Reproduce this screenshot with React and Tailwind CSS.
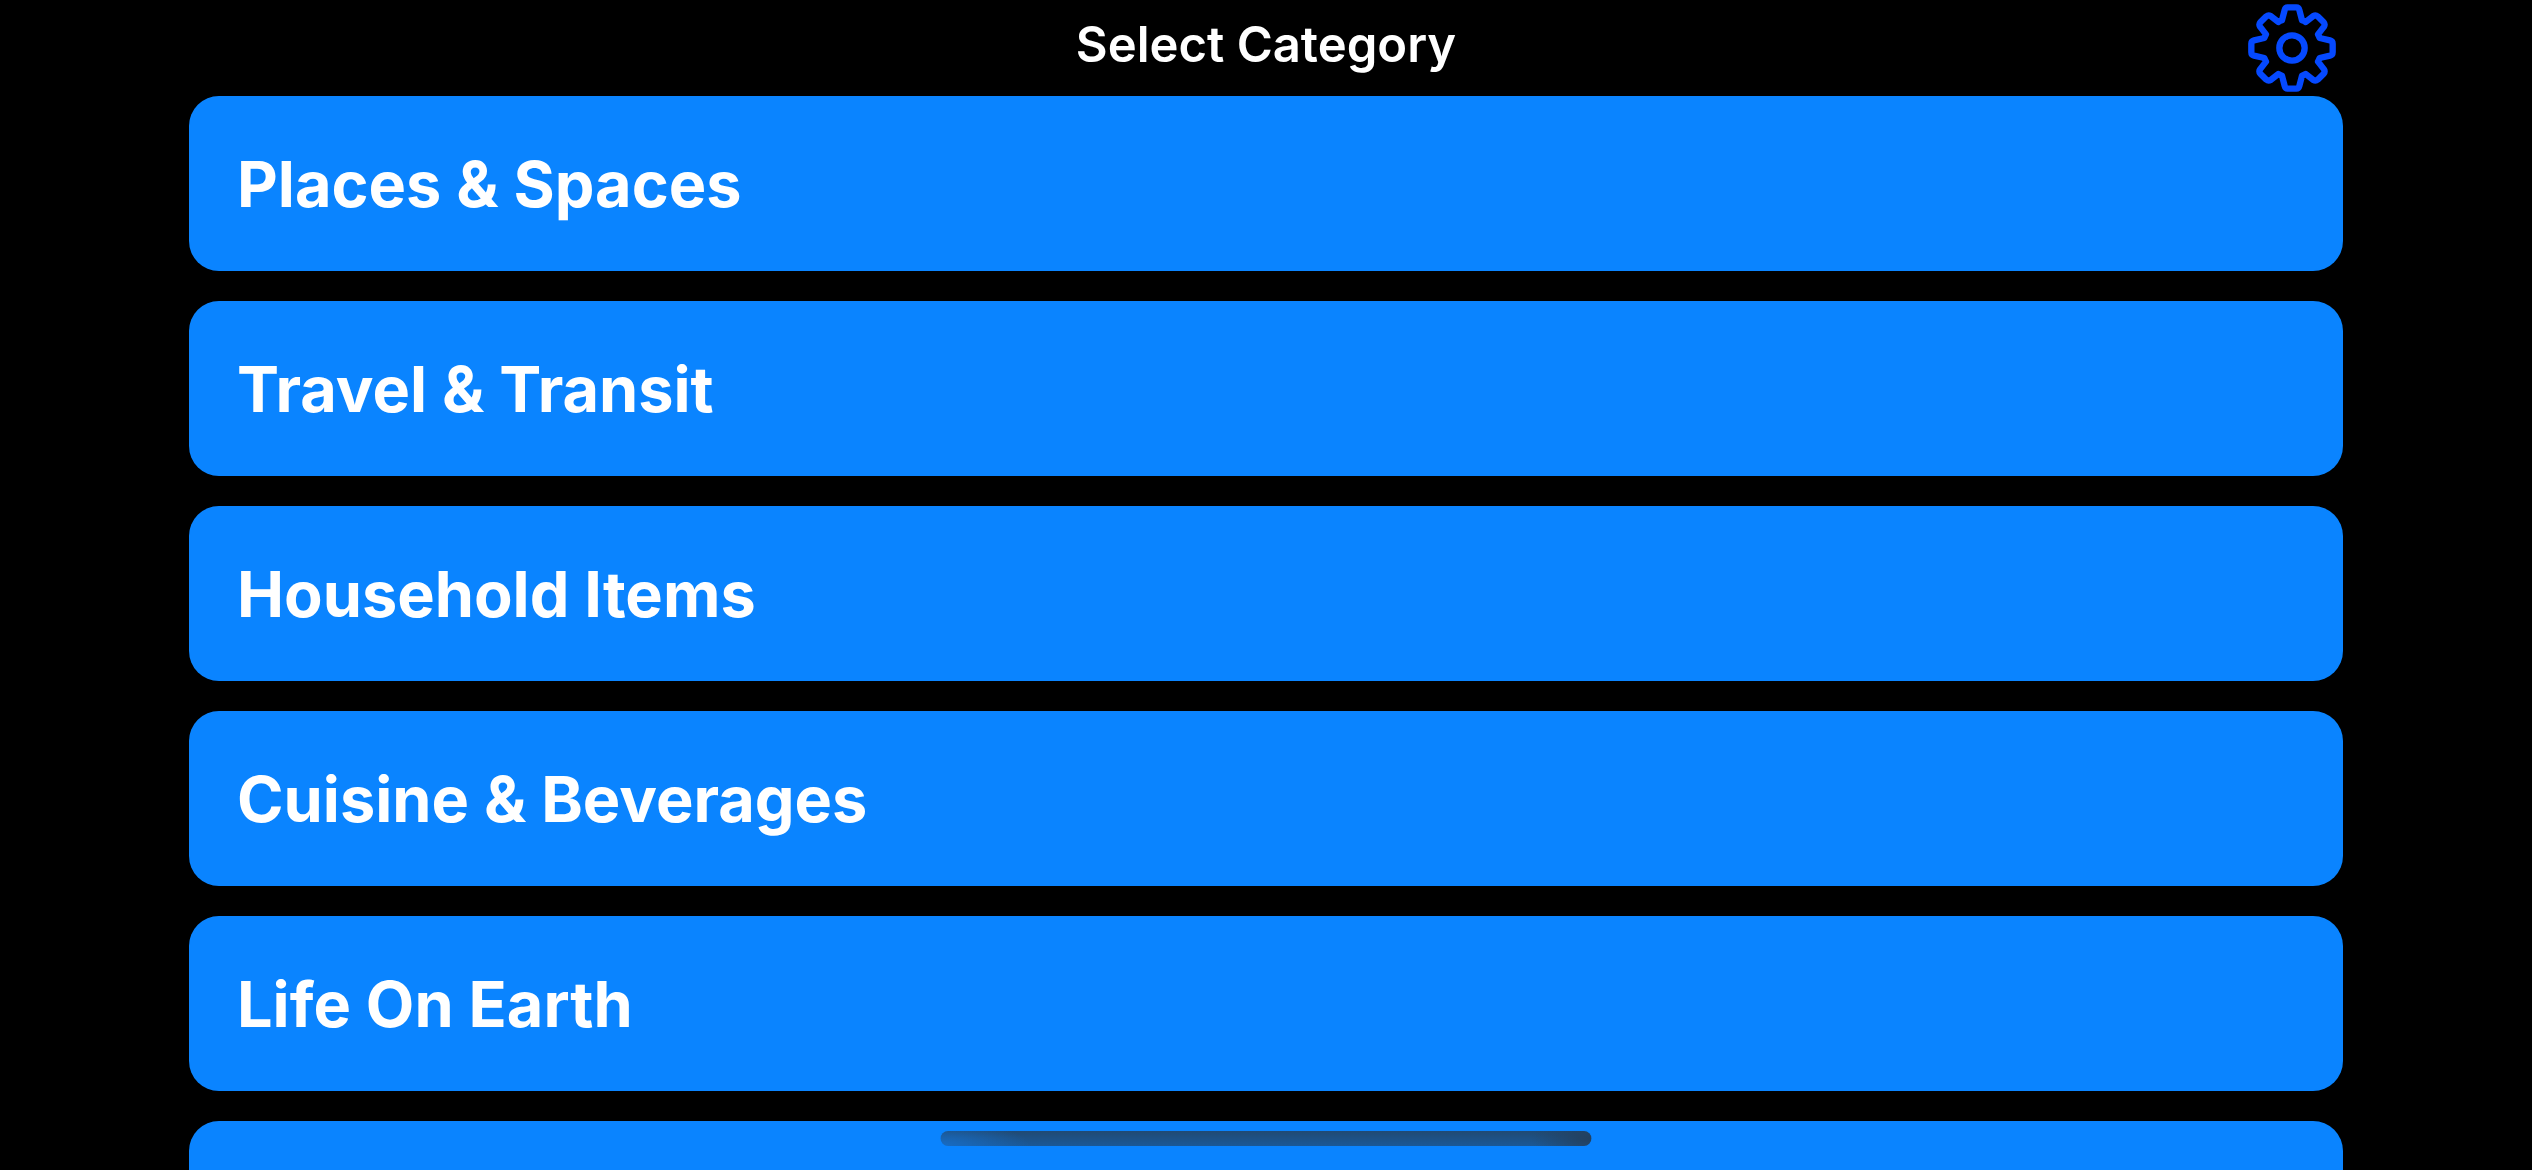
import React from "react";

const categories = [
  "Places & Spaces",
  "Travel & Transit",
  "Household Items",
  "Cuisine & Beverages",
  "Life On Earth",
];

function GearIcon() {
  return (
    <svg viewBox="-132 -132 264 264" className="size-[88px]" fill="none" stroke="#0549ff" strokeWidth="19" strokeLinejoin="round">
      <circle r="38" />
      <path
        d="M-13 -122 H13 Q20 -122 22 -114 L30 -83 Q36 -81 41 -78 L64 -96 Q71 -100 77 -95 L95 -77 Q100 -71 96 -64 L78 -41
           Q81 -36 83 -30 L114 -23 Q122 -21 122 -13 V13 Q122 21 114 23 L83 30 Q81 36 78 41 L96 64 Q100 71 95 77 L77 95 Q71 100 64 96 L41 78
           Q36 81 30 83 L22 114 Q20 122 13 122 H-13 Q-20 122 -22 114 L-30 83 Q-36 81 -41 78 L-64 96 Q-71 100 -77 95 L-95 77 Q-100 71 -96 64 L-78 41
           Q-81 36 -83 30 L-114 23 Q-122 21 -122 13 V-13 Q-122 -21 -114 -23 L-83 -30 Q-81 -36 -78 -41 L-96 -64 Q-100 -71 -95 -77 L-77 -95
           Q-71 -100 -64 -96 L-41 -78 Q-36 -81 -30 -83 L-22 -114 Q-20 -122 -13 -122 Z"
      />
    </svg>
  );
}

export default function App() {
  return (
    <div className="relative h-screen overflow-hidden bg-black font-['Inter',sans-serif] text-white">
      <header className="grid h-24 grid-cols-[1fr_auto_1fr] items-center px-[189px]">
        <h1 className="col-start-2 pb-[6px] text-[49px] leading-[60px] font-semibold">Select Category</h1>
        <button type="button" aria-label="Settings" className="mr-[7px] justify-self-end">
          <GearIcon />
        </button>
      </header>
      <main className="mx-[189px] flex flex-col gap-[30px]">
        {categories.map((name) => (
          <button key={name} type="button" className="h-[175px] shrink-0 rounded-[30px] bg-[#0a84ff] px-12 text-left text-[63px] leading-20 font-bold">
            {name}
          </button>
        ))}
        <button type="button" aria-label="More categories" className="h-[175px] shrink-0 rounded-[30px] bg-[#0a84ff]" />
      </main>
      <div className="absolute bottom-6 left-1/2 h-[15px] w-[651px] -translate-x-1/2 rounded-full bg-[radial-gradient(ellipse_90px_24px_at_0%_100%,#176cc4,transparent),radial-gradient(ellipse_60px_24px_at_100%_50%,#233f5c,transparent),linear-gradient(to_bottom,#214a73,#1a5896)]" />
    </div>
  );
}
